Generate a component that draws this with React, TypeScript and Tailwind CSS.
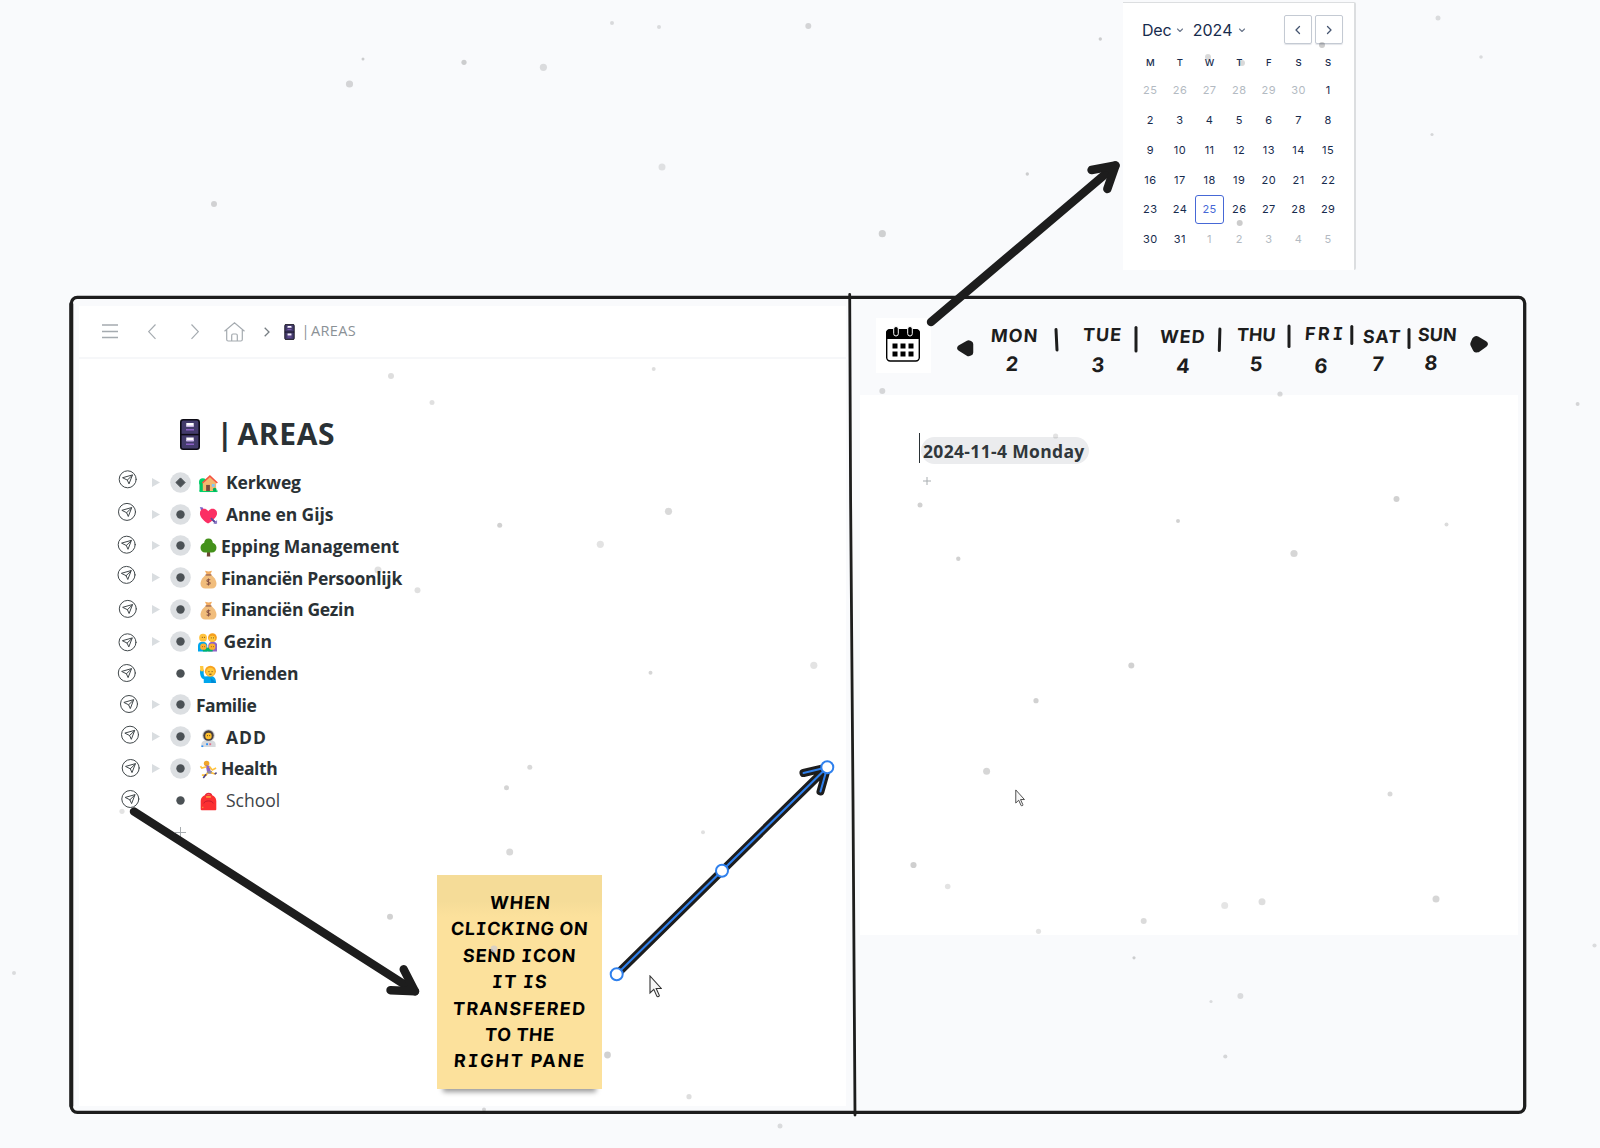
import { useLayoutEffect, useRef, useState, type ReactNode } from 'react';

const INK = '#1d1d1d';

/* Text stretched or tightened with letter spacing so that it spans a given width.
   With slab set, capital I is drawn with serifs. */
function FitText({ text, width, className = '', slab = false }: { text: string; width: number; className?: string; slab?: boolean }) {
  const ref = useRef<HTMLSpanElement>(null);
  const [spacing, setSpacing] = useState(0);
  useLayoutEffect(() => {
    if (!ref.current) return;
    ref.current.style.letterSpacing = '0px';
    const natural = ref.current.offsetWidth;
    const next = (width - natural) / Math.max(1, text.length - 1);
    ref.current.style.letterSpacing = `${next}px`;
    setSpacing(next);
  }, [text, width]);
  return (
    <span ref={ref} className={`inline-block shrink-0 whitespace-pre ${className}`} style={{ letterSpacing: spacing }}>
      {slab
        ? text.split(/(I)/).map((part, i) =>
            part === 'I' ? (
              <span key={i} className="font-['DejaVu_Sans_Mono',monospace] leading-none">
                I
              </span>
            ) : (
              part
            ),
          )
        : text}
    </span>
  );
}

/* ---------- small pictures ---------- */

function Cabinet({ className }: { className: string }) {
  return (
    <svg className={className} viewBox="0 0 20 31">
      <rect x=".8" y=".8" width="18.4" height="29.4" rx="2.4" fill="#433b6b" stroke="#0d0b14" strokeWidth="1.6" />
      <path d="M1 15.6h18" stroke="#0d0b14" strokeWidth="1.5" />
      <path d="M6.3 4h7.4v3.4H6.3zM6.3 18.6h7.4v3.4H6.3z" fill="#fff" />
      <path d="M6.3 6.4h7.4v1.4H6.3zM6.3 21h7.4v1.4H6.3z" fill="#cdb6ee" />
      <path d="M6 10.7h8M6 25.2h8" stroke="#8a5fc4" strokeWidth="1.5" />
    </svg>
  );
}

const emoji: Record<string, ReactNode> = {
  house: (
    <>
      <circle cx="4" cy="8.500" r="4" fill="#00d26a" />
      <path d="M.5 9h5v9h-5z" fill="#00c462" />
      <path d="M.5 17.2h19v1.8H.5z" fill="#00d26a" />
      <path d="M4 9 11.500 3l6.500 6v9H4z" fill="#f3b96f" />
      <path d="M3.500 9.500 11.500 2.200 19.300 9.500" fill="none" stroke="#f4533f" strokeWidth="1.700" />
      <path d="M7.500 11.500h4V18h-4z" fill="#7a4a3a" />
      <path d="M13.500 10.500h3v3h-3z" fill="#7ec8f5" />
      <circle cx="16.500" cy="16.600" r="2" fill="#00b35a" />
    </>
  ),
  heart: (
    <>
      <path d="M2 2.5 18 18" stroke="#5a4a9c" strokeWidth="1.8" />
      <path d="M.8 1 4 1.6l1.2 2.9L2.4 4z" fill="#7a62c8" />
      <path d="M9.500 18.500C3 14 1 10.800 1 7.500c0-2.900 2-4.700 4.400-4.700 1.900 0 3.300 1 4.300 2.800C10.800 3.800 12.200 2.800 14.200 2.800c2.600 0 4.800 1.800 4.800 4.700 0 3.300-2.700 6.500-9.500 11z" fill="#fb2f63" />
      <path d="M12.5 12.8 17.6 18" stroke="#5a4a9c" strokeWidth="1.7" />
      <path d="M15 18.8h4v-4z" fill="#8b7bc9" />
    </>
  ),
  tree: (
    <>
      <path d="M8.700 12h2.700l.5 7.500H8.200z" fill="#6d4534" />
      <path d="M10 .5c3 0 4.500 2.200 4.500 4.500 2.200.8 3.900 2.700 3.900 5.300 0 3-2.100 5-4.900 5h-7c-2.800 0-4.900-2-4.900-5C1.600 7.700 3.300 5.800 5.500 5 5.500 2.700 7 .5 10 .5z" fill="#44911b" />
    </>
  ),
  money: (
    <>
      <path d="M6.300.8 10 1.700l3.700-.9-1.900 4.200H8.200z" fill="#f3ad61" />
      <path d="M7.500 4.800h5c2.500 1.800 5.900 5.700 5.900 9.700 0 3.200-2.100 5-4.900 5h-7c-2.800 0-4.900-1.800-4.900-5 0-4 3.400-7.900 5.900-9.700z" fill="#f1bd7c" />
      <path d="M7 5.200h6" stroke="#8c5543" strokeWidth="1.200" />
      <path d="M11.800 10.600c-.5-.8-3.500-.9-3.500.7 0 1.700 3.600.8 3.600 2.500 0 1.600-3 1.600-3.800.5M10 9v7.200" fill="none" stroke="#8a5443" strokeWidth="1.100" />
    </>
  ),
  family: (
    <>
      <path d="M0 19v-6c0-2.500 2-4 4.500-4s5 1.500 5 4v6z" fill="#00a6ed" />
      <path d="M10.5 19v-6c0-2.500 2-4 4.500-4s5 1.500 5 4v6z" fill="#8d65c5" />
      <path d="M5 15h10v4H5z" fill="#00b36a" />
      <circle cx="5.2" cy="4.800" r="4" fill="#ffc23d" />
      <circle cx="14.8" cy="4.800" r="4.5" fill="#f59f1d" />
      <circle cx="14.6" cy="5.8" r="3.100" fill="#ffc83d" />
      <circle cx="5.5" cy="14" r="3.300" fill="#ffb02e" />
      <circle cx="14.5" cy="14" r="3.300" fill="#ffb02e" />
      <path d="M4 4.500h.8M6.300 4.500h.8M13.200 5h.8M15.600 5h.8M4.400 14h.6M6.600 14h.6M13.300 14h.6M15.500 14h.6" stroke="#5b3a20" strokeWidth="1" />
    </>
  ),
  hand: (
    <>
      <path d="M1 5c0 6 1 9 4 10v4h13c0-4-1.500-7-5-7.500L6 12C4.500 10 5 8 5 5z" fill="#00a6ed" />
      <path d="M1 1h3.500L5 6.500H1.500z" fill="#ffc83d" />
      <circle cx="12" cy="6.500" r="5.800" fill="#f7a21f" />
      <circle cx="12" cy="7.400" r="4.500" fill="#ffc83d" />
      <path d="M10 7h1M13.300 7h1M10.800 9.700h2.400" stroke="#5b3a20" strokeWidth="1" />
      <path d="m12 13 6 6h-5z" fill="#0089d4" />
    </>
  ),
  astronaut: (
    <>
      <path d="M2.500 19v-3c0-2.500 2-4 4.500-4h6c2.500 0 4.500 1.500 4.500 4v3z" fill="#d7d9dd" />
      <circle cx="10" cy="6.800" r="6.600" fill="#cfd2d6" />
      <circle cx="10" cy="6.800" r="5.500" fill="#4a4040" />
      <circle cx="10" cy="7.300" r="3.400" fill="#ffc02e" />
      <path d="M8.500 7h.9M10.800 7h.9" stroke="#4a2d18" strokeWidth="1" />
      <path d="M7.500 15h2v2h-2z" fill="#2a8ff7" />
      <path d="M10.800 15h2v2h-2z" fill="#e0708a" />
      <path d="M2.500 17.300h2V19h-2z" fill="#2a8ff7" />
    </>
  ),
  runner: (
    <>
      <circle cx="8" cy="3.600" r="2.900" fill="#f0a52a" />
      <path d="M7 5.500 11 6l1.500 6-4 1z" fill="#8d65c5" />
      <path d="M8 7 3 8.500l-1.500-2M11 7l3 3.500 4-2" fill="none" stroke="#ffc23d" strokeWidth="1.700" />
      <path d="M8.500 11.500h5l1 3H8z" fill="#8d8a9e" />
      <path d="M9 13.500 7.500 16H3M13 13.500l4.500 1.200" fill="none" stroke="#ffc23d" strokeWidth="1.800" />
      <path d="m7.500 15-3 4M16.500 15l2-1.800" stroke="#4c4584" strokeWidth="1.700" />
    </>
  ),
  bag: (
    <>
      <path d="M7 4C7 1 13 1 13 4" fill="none" stroke="#e0283a" strokeWidth="1.800" />
      <path d="M1.800 18.200V9.500C1.800 5 5.600 2.500 10 2.500S18.200 5 18.200 9.500v8.700c0 .7-.4 1.100-1.100 1.100H2.900c-.7 0-1.100-.4-1.100-1.100z" fill="#fb2f31" />
      <path d="M7.500 5.200h5" stroke="#f9b13a" strokeWidth="1.500" />
      <path d="M5 12c1-3.500 9-3.500 10 0" fill="none" stroke="#c01a2e" strokeWidth="1" />
      <path d="M4 15.500v1.500" stroke="#f9b13a" />
    </>
  ),
};

function Send({ x, y }: { x: number; y: number }) {
  return (
    <g transform={`translate(${x} ${y})`} fill="none" stroke="#41484b" strokeWidth="1" strokeLinejoin="round">
      <circle r="8.500" />
      <path d="M4.600-4 1.300 4.600-.4.800-4.800-1.400zM4.600-4-.4.800" />
    </g>
  );
}

function Pointer({ className }: { className: string }) {
  return (
    <svg className={className} viewBox="0 0 13 23">
      <path d="M1 1v17l3.800-3.600 3 6.700c.6 1.200 3 .4 2.400-1l-3-6.600H12.300z" fill="#f6f6f6" stroke="#333" strokeWidth="1.100" />
    </svg>
  );
}

/* ---------- left pane ---------- */

type Row = { label: string; w: number; gap: string; icon?: string; leaf?: boolean; diamond?: boolean; plain?: boolean };

const rows: Row[] = [
  { label: 'Kerkweg', w: 75, gap: 'ml-[8px]', icon: 'house', diamond: true },
  { label: 'Anne en Gijs', w: 107, gap: 'ml-[8px]', icon: 'heart' },
  { label: 'Epping Management', w: 178, gap: 'ml-[3px]', icon: 'tree' },
  { label: 'Financiën Persoonlijk', w: 181, gap: 'ml-[3px]', icon: 'money' },
  { label: 'Financiën Gezin', w: 134, gap: 'ml-[3px]', icon: 'money' },
  { label: 'Gezin', w: 48, gap: 'ml-[6.500px]', icon: 'family' },
  { label: 'Vrienden', w: 77, gap: 'ml-[3px]', icon: 'hand', leaf: true },
  { label: 'Familie', w: 61, gap: 'ml-[5px]' },
  { label: 'ADD', w: 40, gap: 'ml-[8px]', icon: 'astronaut' },
  { label: 'Health', w: 57, gap: 'ml-[3px]', icon: 'runner' },
  { label: 'School', w: 54, gap: 'ml-[8px]', icon: 'bag', leaf: true, plain: true },
];

function LeftPane() {
  return (
    <section className="absolute left-[79px] top-[306px] flex h-[800px] w-[767px] flex-col bg-white font-['Open_Sans',sans-serif]">
      <header className="flex h-[53px] shrink-0 items-center border-b-2 border-[#f6f7f9] pl-[23px] text-[#a5abb0]">
        <svg className="h-4 w-4" viewBox="0 0 16 16" fill="none" stroke="currentColor" strokeWidth="1.300">
          <path d="M0 1h16M0 7.500h16M0 13.500h16" />
        </svg>
        <svg className="ml-[30px] h-4 w-2" viewBox="0 0 8 16" fill="none" stroke="currentColor" strokeWidth="1.200">
          <path d="M7.500.5.700 7.700l6.800 7.100" />
        </svg>
        <svg className="ml-[35px] h-4 w-2" viewBox="0 0 8 16" fill="none" stroke="currentColor" strokeWidth="1.200">
          <path d="m.5.5 6.800 7.200-6.800 7.100" />
        </svg>
        <svg className="ml-[25px] h-5 w-[21px]" viewBox="0 0 21 20" fill="none" stroke="currentColor" strokeWidth="1.200">
          <path d="M.5 9.300 10.500.8l10 8.500M2.700 8v9.500c0 .9.500 1.500 1.500 1.500h12.600c1 0 1.500-.6 1.500-1.500V8M7.700 19v-5.500c0-.9.500-1.500 1.300-1.500h3c.8 0 1.300.6 1.300 1.500V19" />
        </svg>
        <svg className="ml-[18.500px] h-[10px] w-[6px]" viewBox="0 0 6 10" fill="none" stroke="#777e83" strokeWidth="1.300">
          <path d="m.7.700 4.300 4.300L.7 9.300" />
        </svg>
        <Cabinet className="ml-[14px] h-4 w-[11px]" />
        <span className="ml-[7px] w-2 shrink-0 pb-px text-[14.500px] leading-5 text-[#8b9196]">|</span>
        <FitText text="AREAS" width={44.500} className="ml-[1.500px] pb-px text-[14.500px] leading-5 text-[#8b9196]" />
      </header>

      <h1 className="mt-[55px] flex h-10 shrink-0 items-center pl-[101px] text-[30px] font-bold text-[#2a3135]">
        <Cabinet className="h-[31px] w-5" />
        <span className="flex w-[39px] shrink-0 justify-end pr-1.5 leading-10">|</span>
        <FitText text="AREAS" width={97.500} className="-ml-[1.500px] leading-10" />
      </h1>

      <ul className="mt-[12.400px] flex flex-col">
        {rows.map((r) => (
          <li key={r.label} className="flex h-[31.800px] items-center pl-[73px]">
            <svg className={r.leaf ? 'invisible h-[9px] w-2' : 'h-[9px] w-2'} viewBox="0 0 8 8" preserveAspectRatio="none">
              <path d="M0 0v8L8 4z" fill="#d9dde0" />
            </svg>
            <svg className="ml-[10px] h-[21px] w-[21px]" viewBox="-10.500 -10.500 21 21">
              {!r.leaf && <circle r="10.300" fill="#dcdfe2" />}
              {r.diamond ? <path d="M0-4.600 4.600 0 0 4.600-4.600 0z" fill="#4b5155" stroke="#4b5155" strokeLinejoin="round" /> : <circle r="4.200" fill="#4b5155" />}
            </svg>
            {r.icon && (
              <svg className={r.icon === 'family' ? 'ml-[6.500px] mt-[2px] h-[19.500px] w-[19.500px]' : 'ml-[8px] mt-[3px] h-[19px] w-[19px]'} viewBox="0 0 20 20">
                {emoji[r.icon]}
              </svg>
            )}
            <span className={`${r.gap} pt-px`}>
              <FitText
                text={r.label}
                width={r.w}
                className={r.plain ? 'text-[17.500px] leading-6 text-[#3d4448]' : 'text-[17.500px] font-bold leading-6 text-[#2a3135]'}
              />
            </span>
          </li>
        ))}
      </ul>
      <svg className="ml-[96px] mt-[11px] h-[11px] w-[11px]" viewBox="0 0 11 11" stroke="#a8adb0" strokeWidth="1">
        <path d="M0 5.500h11M5.500 0v11" />
      </svg>
    </section>
  );
}

/* ---------- right pane ---------- */

function RightPane() {
  return (
    <section className="absolute left-[860px] top-[395px] h-[540px] w-[658px] bg-white pl-[59px] pt-[38px] font-['Open_Sans',sans-serif]">
      <div className="flex h-[30px] items-center">
        <span className="h-[30px] w-px bg-[#2a3135]" />
        <span className="ml-px mt-1 flex h-[27px] w-[167.500px] items-center rounded-full bg-[#ebecee] pl-0.5 pt-px">
          <FitText text="2024-11-4 Monday" width={161} className="text-[17.500px] font-bold leading-6 text-[#30373b]" />
        </span>
      </div>
      <svg className="ml-1 mt-[14px] h-2 w-2" viewBox="0 0 8 8" stroke="#a8adb0">
        <path d="M0 4h8M4 0v8" />
      </svg>
    </section>
  );
}

const handText = "font-['Inter',sans-serif] -skew-x-[4deg] font-bold";

const days = [
  { name: 'MON', num: '2', w: 46, pos: 'left-[991px] top-[325px]', numPos: 'left-[1002px] top-[354px]' },
  { name: 'TUE', num: '3', w: 38, pos: 'left-[1083px] top-[324px]', numPos: 'left-[1088px] top-[355px]' },
  { name: 'WED', num: '4', w: 45, pos: 'left-[1160px] top-[326px]', numPos: 'left-[1173px] top-[356px]' },
  { name: 'THU', num: '5', w: 39, pos: 'left-[1237px] top-[324px]', numPos: 'left-[1246px] top-[354px]' },
  { name: 'FRI', num: '6', w: 38, pos: 'left-[1305px] top-[323px]', numPos: 'left-[1311px] top-[356px]' },
  { name: 'SAT', num: '7', w: 37, pos: 'left-[1363px] top-[326px]', numPos: 'left-[1368px] top-[354px]' },
  { name: 'SUN', num: '8', w: 39, pos: 'left-[1418px] top-[324px]', numPos: 'left-[1421px] top-[353px]' },
];

function DayLabels() {
  return (
    <>
      {days.map((d) => (
        <div key={d.name}>
          <div className={`absolute ${d.pos} ${handText} text-[18px] leading-[21px] text-[#1d1d1d]`}>
            <FitText slab text={d.name} width={d.w} />
          </div>
          <div className={`absolute ${d.numPos} ${handText} w-5 text-center text-[20px] leading-[21px] text-[#1d1d1d]`}>{d.num}</div>
        </div>
      ))}
    </>
  );
}

function CalendarTile() {
  return (
    <div className="absolute left-[876px] top-[318px] flex h-[55px] w-[55px] justify-center bg-white pr-px pt-2">
      <svg className="h-9 w-[34px]" viewBox="0 0 34 36">
        <rect x=".7" y="4" width="32.600" height="31" rx="3.500" fill="#fff" stroke="#000" strokeWidth="1.400" />
        <path d="M0 13V7c0-2.500 1.500-4 4-4h26c2.500 0 4 1.500 4 4v6z" fill="#000" />
        <rect x="7.700" y=".5" width="4.600" height="9.500" rx="2.300" fill="#000" stroke="#fff" />
        <rect x="21.700" y=".5" width="4.600" height="9.500" rx="2.300" fill="#000" stroke="#fff" />
        <path d="M6.500 17.500h5v5h-5zM14.500 17.500h5v5h-5zM22.500 17.500h5v5h-5zM6.500 25.500h5v5h-5zM14.500 25.500h5v5h-5zM22.500 25.500h5v5h-5z" fill="#000" />
      </svg>
    </div>
  );
}

/* ---------- month picker ---------- */

const cells = [25, 26, 27, 28, 29, 30, ...Array.from({ length: 31 }, (_, i) => i + 1), 1, 2, 3, 4, 5];

function Chevron({ d, className }: { d: string; className: string }) {
  return (
    <svg className={className} viewBox="0 0 10 10" fill="none" stroke="currentColor" strokeLinecap="round" strokeLinejoin="round">
      <path d={d} />
    </svg>
  );
}

function MonthPicker() {
  return (
    <section className="absolute left-[1123px] top-[2px] h-[268px] w-[233px] rounded-r-[2px] border-r-2 border-t border-[#dcdee0] bg-white pl-[12.500px] pt-[12px] font-['Inter',sans-serif] text-[#172b4d]">
      <div className="flex h-[29px] items-center pl-[6.500px] text-[16px]">
        <FitText text="Dec" width={29.500} />
        <Chevron d="m2.500 4 2.500 2.500L7.500 4" className="ml-1 h-[10px] w-[10px] text-[#6b778c] [stroke-width:1.100]" />
        <FitText text="2024" width={40} className="ml-[7.500px]" />
        <Chevron d="m2.500 4 2.500 2.500L7.500 4" className="ml-[5px] h-[10px] w-[10px] text-[#6b778c] [stroke-width:1.100]" />
        <div className="ml-auto mr-[11px] flex gap-[3px] text-[#44546f]">
          <span className="flex h-[29px] w-7 items-center justify-center rounded-[2px] border border-[#c4cad3] shadow-[0_1px_1px_#e3e5e9]">
            <Chevron d="M6.500 1.500 3 5l3.500 3.500" className="h-[10px] w-[10px] [stroke-width:1.300]" />
          </span>
          <span className="flex h-[29px] w-7 items-center justify-center rounded-[2px] border border-[#c4cad3] shadow-[0_1px_1px_#e3e5e9]">
            <Chevron d="M3.500 1.500 7 5 3.500 8.500" className="h-[10px] w-[10px] [stroke-width:1.300]" />
          </span>
        </div>
      </div>
      <div className="mt-3 grid w-[207.500px] grid-cols-7 text-center text-[9.500px] font-medium leading-[14px]">
        {['M', 'T', 'W', 'T', 'F', 'S', 'S'].map((d, i) => (
          <span key={i}>{d}</span>
        ))}
      </div>
      <div className="mt-[5.900px] grid w-[207.500px] auto-rows-[29.700px] grid-cols-7 text-[11px] tracking-[0.500px]">
        {cells.map((n, i) => {
          const muted = i < 6 || i > 36;
          const picked = i === 30;
          return (
            <span
              key={i}
              className={`flex items-center justify-center ${muted ? 'text-[#b3bac2]' : ''} ${picked ? 'rounded-[3px] border border-[#4668d6] text-[#4668d6]' : ''}`}
            >
              {n}
            </span>
          );
        })}
      </div>
    </section>
  );
}

/* ---------- sticky note ---------- */

const noteLines: [string, number][] = [
  ['WHEN', 60],
  ['CLICKING ON', 137],
  ['SEND ICON', 112],
  ['IT IS', 55],
  ['TRANSFERED', 132],
  ['TO THE', 69],
  ['RIGHT PANE', 130],
];

function StickyNote() {
  return (
    <div className="absolute left-[437px] top-[875px] h-[214px] w-[165px]">
      <div className="absolute inset-x-1.5 bottom-0 h-5 shadow-[0_3px_5px_rgba(0,0,0,0.400)]" />
      <div className="relative flex h-full flex-col items-center bg-[linear-gradient(#f5dc98_0,#f5dc98_26px,#fce19c_42px)] pt-[15px] text-[18px] leading-[26.400px] text-black">
        {noteLines.map(([t, w]) => (
          <div key={t} className={`${handText} flex h-[26.400px] justify-center pl-px`}>
            <FitText slab text={t} width={w} />
          </div>
        ))}
      </div>
    </div>
  );
}

/* ---------- ink drawn on the canvas ---------- */

const sends: [number, number][] = [
  [127.7, 479.3], [127, 511.9], [126.7, 544.7], [126.5, 574.9], [127.8, 608.9], [127.5, 642.3],
  [126.8, 673], [129, 704], [130, 734.7], [130.7, 768], [130.3, 799],
];

const bars = [
  'M1056 329.500 1057 350', 'M1136 327.500V351', 'M1219.900 329 1219.300 350.500', 'M1289 326V346.500',
  'M1351.800 326.500V343.500', 'M1409 329.500V347.500',
];

function Ink() {
  return (
    <svg className="pointer-events-none absolute inset-0 h-[1148px] w-[1600px]" viewBox="0 0 1600 1148" fill="none" strokeLinecap="round" strokeLinejoin="round">
      <rect x="71.300" y="297.300" width="1453.400" height="815" rx="6" stroke={INK} strokeWidth="3.300" />
      <path d="M71.300 304V1106" stroke={INK} strokeWidth="4" />
      <path d="M849.700 294.500 850.600 500 853 800 855 1115" stroke={INK} strokeWidth="2.800" />
      {bars.map((d) => (
        <path key={d} d={d} stroke={INK} strokeWidth="3" />
      ))}
      <path d="M960.500 348 968.500 343.500 970 344V352.500L968.500 353z" fill={INK} stroke={INK} strokeWidth="6.500" />
      <path d="M1484.500 344 1476.500 339.200 1475.300 339.800 1473.500 344 1476 349.200 1477.500 349z" fill={INK} stroke={INK} strokeWidth="6.500" />
      {sends.map(([x, y]) => (
        <Send key={y} x={x} y={y} />
      ))}
      <g stroke={INK} strokeWidth="8.400">
        <path d="M931 322 1115.500 165.500" />
        <path d="M1091.500 170 1115.500 165.500 1107.300 189" />
        <path d="M134 811.500 415 991.300" />
        <path d="M390.500 990.200 415 991.300 403.700 969.300" />
        <path d="M616.700 974.300 827.300 767.300M803.500 773 827.300 767.300 820.500 791.500" strokeWidth="8" />
      </g>
      <g stroke="#2f80ed" strokeWidth="2">
        <path d="M616.700 974.300 827.300 767.300" />
        <path d="M803.500 773 827.300 767.300 820.500 791.500" />
        <circle cx="616.700" cy="974.300" r="6" fill="#fff" />
        <circle cx="722" cy="870.700" r="6" fill="#fff" />
        <circle cx="827.300" cy="767.300" r="6" fill="#fff" />
      </g>
    </svg>
  );
}

const snow: [number, number, number, number][] = [
  [612, 23, 2, .13], [659, 27, 2, .12], [363, 59, 1.5, .18], [464, 62.3, 2.6, .18], [543.4, 67.3, 3.6, .12],
  [349.5, 84, 3.6, .15], [662, 167, 3.5, .1], [214, 204, 3, .16], [808.3, 26, 3, .15], [1100.3, 39, 1.7, .18],
  [1027.3, 174, 1.7, .18], [882.3, 233.7, 3.6, .17], [1208, 57, 3, .15], [1242, 63, 3, .15], [1322, 45, 3, .2],
  [1239.7, 223, 3, .2], [1438, 18, 2.5, .12], [1481, 57, 1.8, .12], [1432, 134.5, 1.6, .14], [391, 376, 3, .13],
  [432, 402.5, 2.5, .12], [653.7, 369, 2, .13], [499.7, 525.3, 2.5, .18], [668.5, 511.3, 3.6, .15], [600.3, 544.3, 3.6, .11],
  [417.5, 590.3, 3, .12], [378, 570, 3.5, .12], [813.8, 665.3, 3.6, .11], [650.5, 672.7, 2, .16], [529.8, 767.3, 2.5, .15],
  [506.5, 787.8, 2.5, .17], [703, 832.3, 2, .12], [509.7, 852, 3.5, .15], [390, 916.7, 3, .18], [122, 811.3, 2.6, .11],
  [494, 949, 3.4, .2], [607.5, 1055, 3.4, .18], [689, 1096.7, 2.6, .13], [484, 1109.5, 2, .15], [780, 1126, 2.5, .12],
  [14, 973, 2, .12], [882.3, 391, 3, .14], [1280, 394, 2.6, .14], [1055.6, 436, 2.6, .11], [920, 505, 2.5, .18],
  [1178, 521, 2, .18], [1396.5, 499, 3, .18], [1446.5, 524.5, 2, .14], [958.3, 558.8, 2.2, .18], [1294, 553.5, 3.6, .16],
  [1131.3, 665.5, 3, .18], [1036, 700.7, 2.6, .18], [986.6, 771.3, 3.5, .16], [1390, 794, 2.5, .15], [913.5, 865, 3.1, .19],
  [947.7, 886.5, 2.8, .11], [1224.7, 905.5, 3.5, .1], [1262, 901.7, 3.5, .13], [1436, 899, 3.5, .16], [1143.7, 921, 3, .14],
  [1038.5, 931.3, 2.6, .11], [1134, 957.8, 1.6, .18], [1240.4, 996, 3, .12], [1211, 1001.5, 1.6, .12], [1225.3, 1056.5, 2.1, .14],
  [1594.5, 945.5, 2.1, .12], [1577.6, 404, 2, .15],
];

function Snow() {
  return (
    <svg className="pointer-events-none absolute inset-0 h-[1148px] w-[1600px]" viewBox="0 0 1600 1148">
      {snow.map(([x, y, r, o]) => (
        <circle key={`${x}-${y}`} cx={x} cy={y} r={r} fill={x === 494 ? '#cfcdd0' : '#000'} opacity={x === 494 ? 0.8 : o} />
      ))}
    </svg>
  );
}

export default function App() {
  return (
    <main className="relative h-[1148px] w-[1600px] overflow-hidden bg-[#f9fafc]">
      <LeftPane />
      <RightPane />
      <CalendarTile />
      <DayLabels />
      <MonthPicker />
      <StickyNote />
      <Ink />
      <Pointer className="absolute left-[649px] top-[975px] h-[23px] w-[13px]" />
      <Pointer className="absolute left-[1015px] top-[789px] h-[18px] w-[10px]" />
      <Snow />
    </main>
  );
}
